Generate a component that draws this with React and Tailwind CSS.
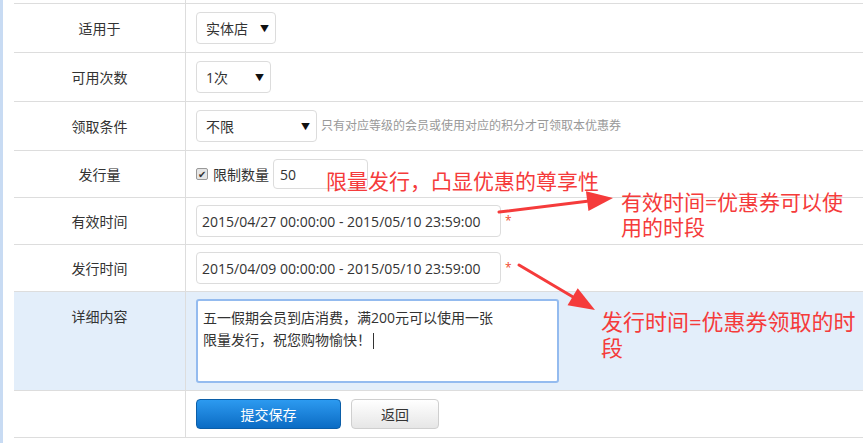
const FONT = { fontFamily: '"Open Sans", "Noto Sans CJK SC", sans-serif' };

const Row = ({ label, h = 'h-[49px]', top = false, className = '', children }) => (
  <div className={`grid grid-cols-[172px_1fr] border-b border-[#dddddd] ${h} ${className}`}>
    <div
      className={`flex justify-center border-r border-[#dddddd] text-[14px] text-[#333] ${
        top ? 'items-start pt-[14px]' : 'items-center'
      }`}
    >
      {label}
    </div>
    <div className={`flex pl-[10px] ${top ? 'items-start pt-[7px]' : 'items-center'}`}>{children}</div>
  </div>
);

const Select = ({ value, w }) => (
  <div
    className={`flex h-[32px] ${w} items-center justify-between rounded-[4px] border border-[#dcdcdc] bg-white pl-[9px] pr-[6px] text-[14px] text-[#333]`}
  >
    <span>{value}</span>
    <span className="text-[9px] leading-none text-[#111]">▼</span>
  </div>
);

const DateInput = ({ value }) => (
  <div className="flex items-center">
    <div className="flex h-[32px] w-[305px] items-center rounded-[4px] border border-[#dcdcdc] bg-white pl-[5px] text-[14px] text-[#333]">
      {value}
    </div>
    <span className="ml-[4px] text-[12px] text-[#f04a2a]">*</span>
  </div>
);

const Arrow = ({ x1, y1, x2, y2 }) => {
  const ang = Math.atan2(y2 - y1, x2 - x1);
  const len = 26;
  const wid = 10;
  const bx = x2 - len * Math.cos(ang);
  const by = y2 - len * Math.sin(ang);
  const px = -Math.sin(ang);
  const py = Math.cos(ang);
  return (
    <>
      <line x1={x1} y1={y1} x2={bx} y2={by} stroke="#f53b3b" strokeWidth="3" strokeLinecap="round" />
      <polygon points={`${x2},${y2} ${bx + px * wid},${by + py * wid} ${bx - px * wid},${by - py * wid}`} fill="#f53b3b" />
    </>
  );
};

export default function App() {
  return (
    <div className="relative flex h-[443px] w-[863px] overflow-hidden bg-white" style={FONT}>
      <div className="w-[3px] bg-[#c8dbf3]" />
      <div className="ml-[11px] flex-1">
        <div className="grid h-[4px] grid-cols-[172px_1fr] border-b border-[#dddddd]">
          <div className="border-r border-[#dddddd]" />
          <div />
        </div>

        <Row label="适用于">
          <Select value="实体店" w="w-[80px]" />
        </Row>
        <Row label="可用次数">
          <Select value="1次" w="w-[75px]" />
        </Row>
        <Row label="领取条件">
          <Select value="不限" w="w-[121px]" />
          <span className="ml-[4px] text-[12px] text-[#999]">只有对应等级的会员或使用对应的积分才可领取本优惠券</span>
        </Row>
        <Row label="发行量" h="h-[47px]">
          <div className="flex items-center">
            <span className="flex h-[12px] w-[12px] items-center justify-center rounded-[2px] border border-[#999] bg-[#e6e6e6] text-[10px] leading-none text-[#333]">
              ✔
            </span>
            <span className="ml-[5px] text-[14px] text-[#333]">限制数量</span>
            <div className="ml-[4px] flex h-[30px] w-[95px] items-center rounded-[4px] border border-[#dcdcdc] pl-[6px] text-[14px] text-[#333]">
              50
            </div>
          </div>
        </Row>
        <Row label="有效时间" h="h-[47px]">
          <DateInput value="2015/04/27 00:00:00 - 2015/05/10 23:59:00" />
        </Row>
        <Row label="发行时间" h="h-[47px]">
          <DateInput value="2015/04/09 00:00:00 - 2015/05/10 23:59:00" />
        </Row>
        <Row label="详细内容" h="h-[99px]" top className="bg-[#e3eefa]">
          <div className="h-[84px] w-[363px] rounded-[3px] border-2 border-[#94bbef] bg-white px-[5px] pt-[6px] text-[14px] leading-[22px] text-[#333]">
            <div>五一假期会员到店消费，满200元可以使用一张</div>
            <div>
              限量发行，祝您购物愉快！<span className="ml-[2px] inline-block h-[16px] w-px bg-[#333] align-middle" />
            </div>
          </div>
        </Row>
        <Row label="" h="h-[47px]">
          <div className="flex items-center gap-[10px]">
            <button className="h-[30px] w-[145px] rounded-[4px] border border-[#0b5ea8] bg-gradient-to-b from-[#2c9af0] to-[#0a6cc4] text-[14px] text-white">
              提交保存
            </button>
            <button className="h-[30px] w-[88px] rounded-[4px] border border-[#cfcfcf] bg-gradient-to-b from-[#ffffff] to-[#e6e6e6] text-[14px] text-[#333]">
              返回
            </button>
          </div>
        </Row>
      </div>

      <svg className="pointer-events-none absolute left-0 top-0" width="863" height="443">
        <Arrow x1={499} y1={212} x2={613} y2={198} />
        <Arrow x1={519} y1={265} x2={595} y2={310} />
      </svg>

      <div className="pointer-events-none absolute left-[326px] top-[169px] whitespace-nowrap text-[21px] leading-[25px] text-[#f53b3b]">
        限量发行，凸显优惠的尊享性
      </div>
      <div className="pointer-events-none absolute left-[621px] top-[190px] whitespace-nowrap text-[21px] leading-[25px] text-[#f53b3b]">
        有效时间=优惠券可以使
        <br />
        用的时段
      </div>
      <div className="pointer-events-none absolute left-[601px] top-[308px] whitespace-nowrap text-[22px] leading-[26px] text-[#f53b3b]">
        发行时间=优惠券领取的时
        <br />
        段
      </div>
    </div>
  );
}
